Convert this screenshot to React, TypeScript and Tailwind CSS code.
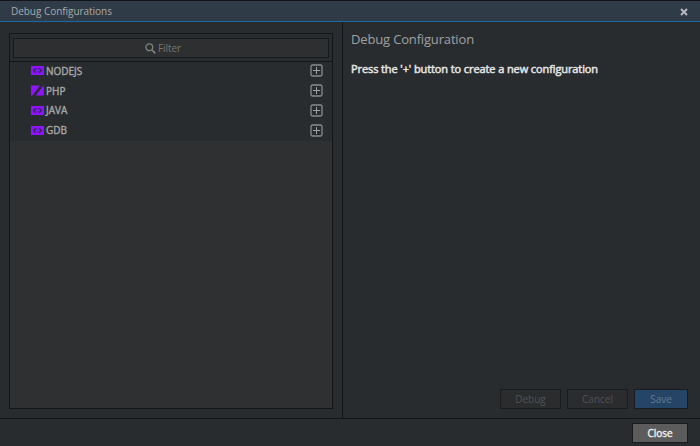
const configurations = [
  { name: 'NODEJS', icon: 'code' },
  { name: 'PHP', icon: 'slash' },
  { name: 'JAVA', icon: 'code' },
  { name: 'GDB', icon: 'code' },
];

function TypeIcon({ kind }: { kind: string }) {
  if (kind === 'slash') {
    return (
      <svg className="mr-[2px] h-[11px] w-[13px] shrink-0" viewBox="0 0 13 11" fill="#9013fe">
        <path d="M0 .5h9L1.5 10.5H0zM12.8 0v10.5H4.8z" />
      </svg>
    );
  }
  return (
    <svg className="mr-[2px] h-[9px] w-[13px] shrink-0" viewBox="0 0 13 9">
      <path fill="#9013fe" d="M0 0h13v9H0z" />
      <path d="M4.8 2.2 2.6 4.5l2.2 2.3M8.2 2.2l2.2 2.3-2.2 2.3M6 2.6v1M7 5.2v1" fill="none" stroke="#292c4f" strokeWidth="1.3" />
    </svg>
  );
}

function AddIcon() {
  return (
    <svg className="ml-auto mr-[9px] size-[13px] shrink-0" viewBox="0 0 13 13" fill="none" stroke="#88898a">
      <rect x="1" y="1" width="11" height="11" rx="1.5" strokeWidth="1.3" />
      <path d="M6.5 3v7M3 6.5h7" stroke="#a1a2a3" />
    </svg>
  );
}

export default function App() {
  return (
    <div className="flex h-[446px] w-[700px] flex-col overflow-hidden border-t border-[#131619] bg-[#292c2f] font-['Open_Sans',sans-serif] text-[10px] text-[#aaaaaa]">
      <header className="flex h-[21px] shrink-0 items-center justify-between border-b border-[#1f68a7] bg-[#2f3b47] pl-[11px] pr-3">
        <span className="text-[10px] leading-[18px] tracking-[-0.04px]">Debug Configurations</span>
        <svg className="mt-px size-2" viewBox="0 0 8 8" stroke="#b6b9bc" strokeWidth="2">
          <path d="m1 1 6 6M7 1 1 7" />
        </svg>
      </header>

      <main className="flex h-[396px] shrink-0">
        <aside className="w-[343px] border-r border-[#131619] pl-[9px] pt-[11px]">
          <div className="h-[376px] w-[324px] border border-[#131619] bg-[#2f3031]">
            <div className="h-7 border-b border-[#131619] bg-[#292c2f] px-[3px] pt-1">
              <div className="flex h-5 items-center justify-center border border-[#18191b] bg-[#2e2f31] pr-4 text-[#777777]">
                <svg className="mr-[2px] size-[11px]" viewBox="0 0 11 11" fill="none" stroke="#808182">
                  <circle cx="4.3" cy="4.3" r="3.4" strokeWidth="1.3" />
                  <path d="m7 7 3.3 3.3" strokeWidth="1.7" />
                </svg>
                <span className="text-[10px] tracking-[-0.08px]">Filter</span>
              </div>
            </div>
            <ul className="bg-[#292c2f]">
              {configurations.map((item) => (
                <li key={item.name} className="flex h-[19.75px] items-center pb-[2px] pl-[21px]">
                  <TypeIcon kind={item.icon} />
                  <span className="text-[10px] leading-4 text-[#a4a5a6] [-webkit-text-stroke:0.4px_#a4a5a6]">{item.name}</span>
                  <AddIcon />
                </li>
              ))}
            </ul>
          </div>
        </aside>

        <section className="flex flex-1 flex-col pb-[9px] pl-2 pr-3 pt-2">
          <h1 className="text-[13px] leading-[18px] tracking-[-0.16px] text-[#a0a1a2]">Debug Configuration</h1>
          <p className="mt-[13px] text-[11px] leading-4 tracking-[-0.1px] text-[#e4e4e4] [-webkit-text-stroke:0.5px_#e4e4e4]">Press the '+' button to create a new configuration</p>
          <div className="mt-auto flex justify-end gap-1.5">
            <button className="h-5 w-[61px] border border-[#191b1d] bg-[#2b2c2e] text-[#515254]">Debug</button>
            <button className="h-5 w-[61px] border border-[#191b1d] bg-[#2b2c2e] text-[#515254]">Cancel</button>
            <button className="h-5 w-[54px] border border-[#191b1d] bg-[#244566] text-[#65798c]">Save</button>
          </div>
        </section>
      </main>

      <footer className="flex flex-1 justify-end border-t border-[#131619] pr-3 pt-1">
        <button className="h-5 w-14 border border-[#191b1d] bg-[#5c5c5c] text-[#eeeeee] [-webkit-text-stroke:0.4px_#eeeeee]">Close</button>
      </footer>
    </div>
  );
}
